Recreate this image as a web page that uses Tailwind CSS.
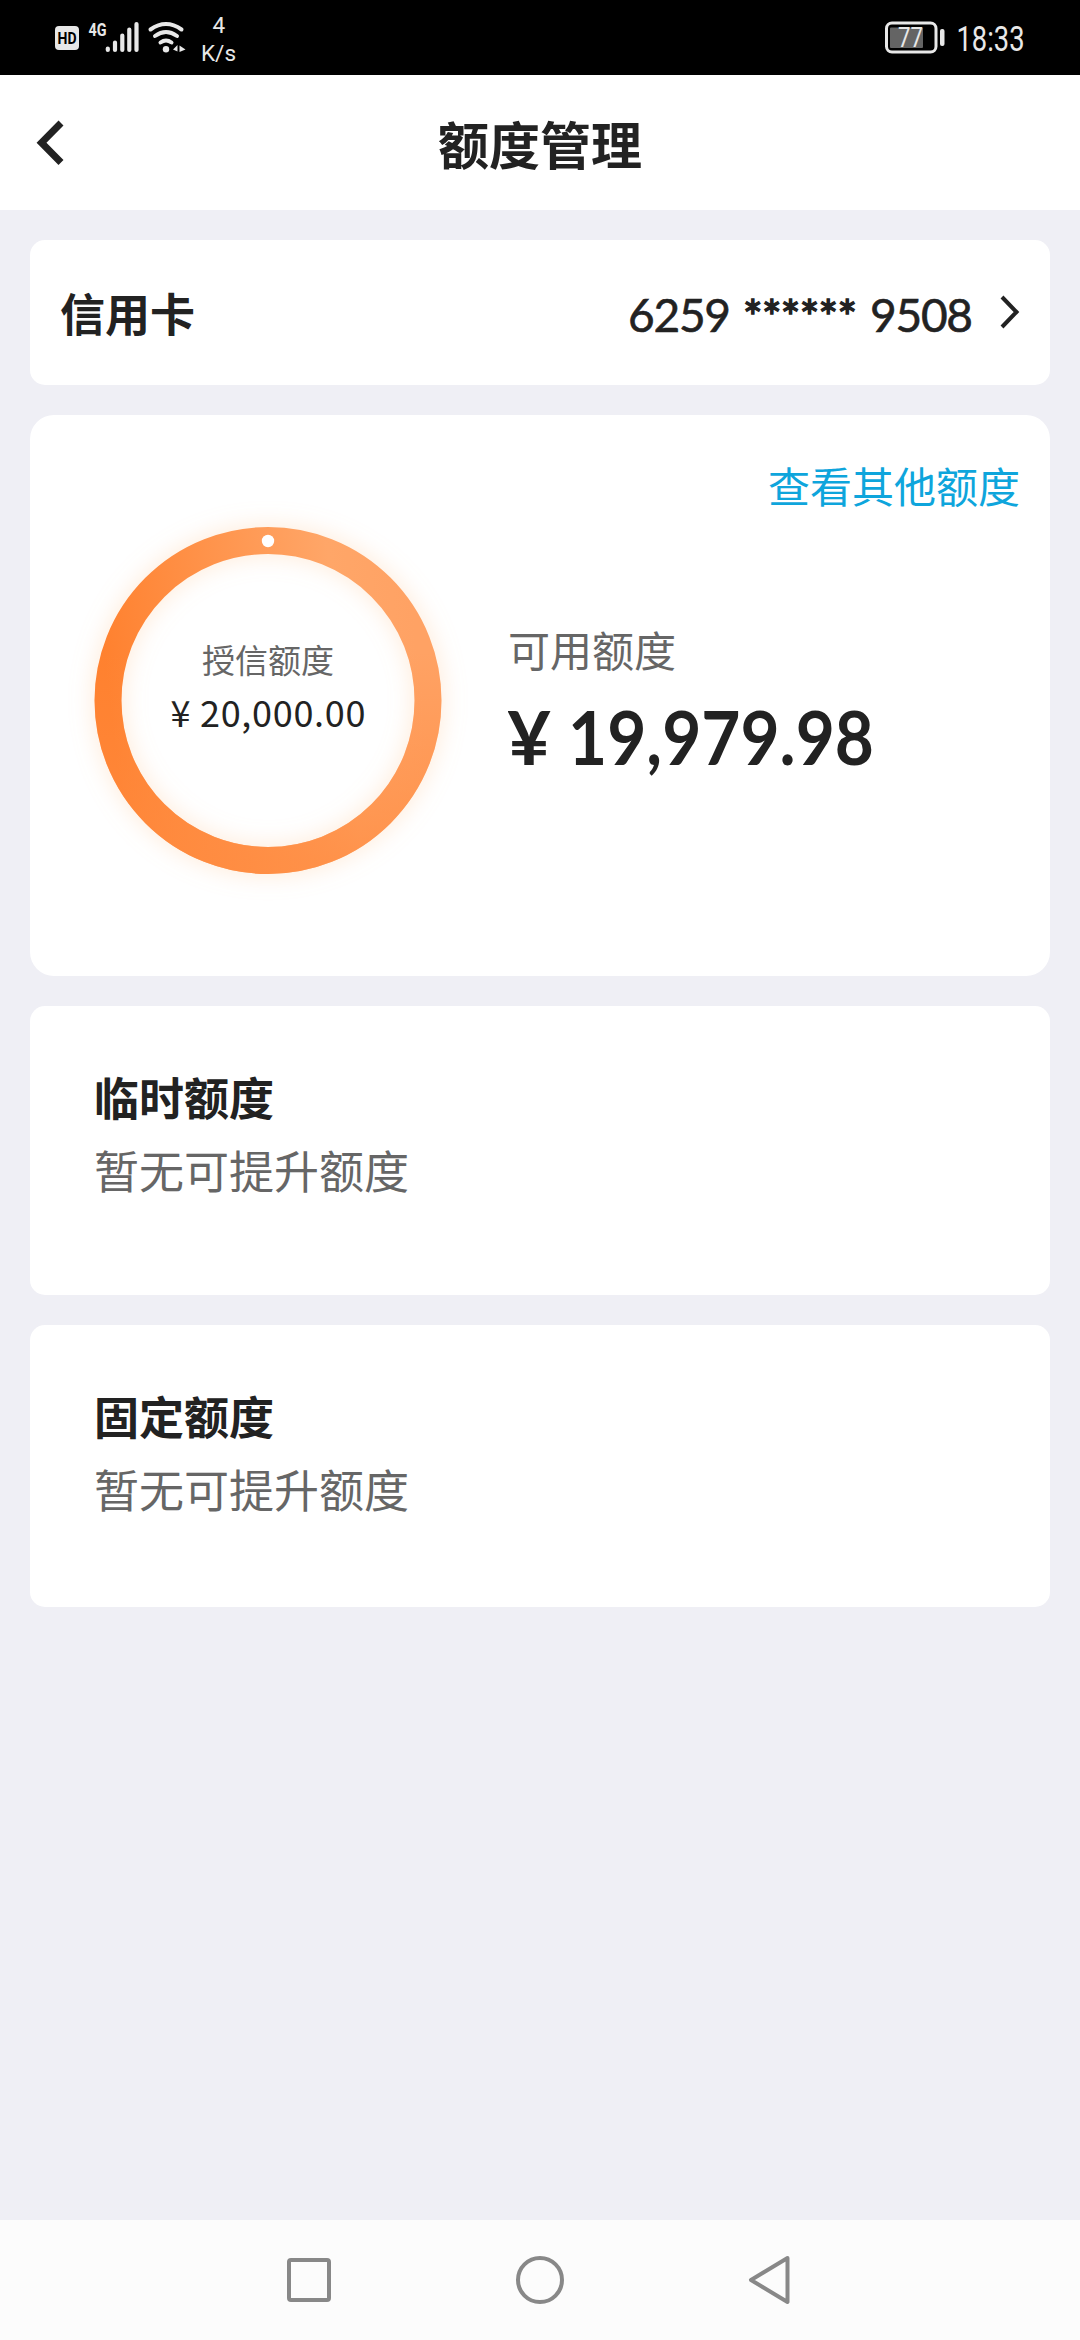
<!DOCTYPE html>
<html lang="zh-CN">
<head>
<meta charset="utf-8">
<title>额度管理</title>
<script src="https://cdn.jsdelivr.net/npm/@tailwindcss/browser@4"></script>
</head>
<body class="flex h-[2340px] w-[1080px] flex-col overflow-hidden bg-[#efeff5] font-['Noto_Sans_CJK_SC',sans-serif] text-[#222]">
  <!-- Status bar -->
  <div class="flex h-[75px] shrink-0 justify-between bg-black">
    <svg class="h-[75px] w-[260px]" viewBox="0 0 260 75" fill="#e8e8e8">
      <rect x="55" y="26" width="24" height="24" rx="4"/>
      <text x="57.5" y="44" font-family="Roboto, sans-serif" font-size="16.5" font-weight="700" fill="#000" textLength="19" lengthAdjust="spacingAndGlyphs">HD</text>
      <text x="88.500" y="36" font-family="Roboto, sans-serif" font-size="19" font-weight="700" textLength="18" lengthAdjust="spacingAndGlyphs">4G</text>
      <g stroke="#e8e8e8" stroke-width="4.200" stroke-linecap="round">
        <path d="M107.800 48.500v1.500M115 42.500V50M122.300 35.500V50M129.300 29.500V50M136.500 24V50"/>
      </g>
      <g fill="none" stroke="#e8e8e8" stroke-width="4" stroke-linecap="round">
        <path d="M150.500 29.500Q166 18.500 181.500 29.500M155 36Q166 28 177 36M160.500 42.500Q166 38.500 171.500 42.500"/>
      </g>
      <circle cx="166" cy="49.300" r="3.200"/>
      <path d="M173 49.500l4.500-4.500v6.500zM179.500 45.500l6 4-6 2.500z"/>
      <text x="212.500" y="33" font-family="Roboto, sans-serif" font-size="22.500">4</text>
      <text x="201" y="60.500" font-family="Roboto, sans-serif" font-size="22.500" textLength="35">K/s</text>
    </svg>
    <svg class="h-[75px] w-[220px]" viewBox="0 0 220 75" fill="#e8e8e8">
      <rect x="26.500" y="23" width="49.500" height="29" rx="5.500" fill="none" stroke="#e8e8e8" stroke-width="3"/>
      <rect x="30" y="27.500" width="33" height="20.500" rx="1" fill="#646464"/>
      <rect x="80" y="29" width="4.500" height="17" rx="2"/>
      <text x="38" y="47" font-family="Roboto, sans-serif" font-size="27" textLength="25" lengthAdjust="spacingAndGlyphs">77</text>
      <text x="96.500" y="51" font-family="Roboto, sans-serif" font-size="35" textLength="68" lengthAdjust="spacingAndGlyphs">18:33</text>
    </svg>
  </div>

  <!-- Title bar -->
  <header class="grid h-[135px] shrink-0 grid-cols-[120px_1fr_120px] items-center bg-white">
    <svg class="ml-[30px] h-[48px] w-[40px]" viewBox="0 0 40 48" fill="none" stroke="#222" stroke-width="7"><path d="M31 4L11.500 23.700 31 43.500"/></svg>
    <h1 class="text-center text-[51px] leading-[60px] font-bold">额度管理</h1>
  </header>

  <main class="flex flex-1 flex-col gap-[30px] px-[30px] pt-[30px]">
    <section class="flex h-[145px] items-center justify-between rounded-[15px] bg-white pr-[28px] pl-[30px]">
      <h2 class="text-[45px] leading-[60px] font-bold">信用卡</h2>
      <div class="flex items-center">
        <svg class="h-[60px] w-[350px]" viewBox="0 0 350 60" fill="#222" stroke="#222" stroke-width="0.600" font-family="Lato, sans-serif" font-size="46">
          <text x="3" y="48.500" textLength="103">6259</text>
          <text x="118" y="50.500" textLength="114" stroke-width="1.500">******</text>
          <text x="245" y="48.500" textLength="103">9508</text>
        </svg>
        <svg class="ml-[23px] h-[36px] w-[24px] -translate-y-px" viewBox="0 0 24 36" fill="none" stroke="#222" stroke-width="4"><path d="M4 3L18.500 18 4 33"/></svg>
      </div>
    </section>

    <section class="flex h-[561px] flex-col rounded-[24px] bg-white">
      <a class="mt-[40px] mr-[30px] self-end text-[42px] leading-[60px] text-[#0ea5dc]">查看其他额度</a>
      <div class="flex">
        <svg class="-mt-[35px] ml-[18px] h-[440px] w-[440px] shrink-0" viewBox="0 0 440 440">
          <defs>
            <linearGradient id="ring" gradientUnits="userSpaceOnUse" x1="55" y1="165" x2="365" y2="130">
              <stop offset="0" stop-color="#ff812f"/>
              <stop offset="0.750" stop-color="#ffa668"/>
              <stop offset="1" stop-color="#ffa264"/>
            </linearGradient>
            <linearGradient id="low" x1="0" y1="0" x2="0" y2="1">
              <stop offset="0.350" stop-color="#ff8b40" stop-opacity="0"/>
              <stop offset="1" stop-color="#ff8b40" stop-opacity="0.700"/>
            </linearGradient>
            <filter id="glow" x="-20%" y="-20%" width="140%" height="140%"><feGaussianBlur stdDeviation="11"/></filter>
          </defs>
          <circle cx="220" cy="220.500" r="160" fill="none" stroke="#ffc48e" stroke-opacity="0.300" stroke-width="32" filter="url(#glow)"/>
          <circle cx="220" cy="220.500" r="160" fill="none" stroke="url(#ring)" stroke-width="27"/>
          <circle cx="220" cy="220.500" r="160" fill="none" stroke="url(#low)" stroke-width="27"/>
          <circle cx="220" cy="61" r="6.200" fill="#fff"/>
          <text x="220" y="193" text-anchor="middle" font-size="33" fill="#666">授信额度</text>
          <text x="122.500" y="247" font-size="36" fill="#222" textLength="195">¥ 20,000.00</text>
        </svg>
        <div class="mt-[104px] ml-[20px] flex flex-col">
          <p class="text-[42px] leading-[60px] text-[#666]">可用额度</p>
          <svg class="h-[110px] w-[380px]" viewBox="0 0 380 110" fill="#222" font-family="Lato, sans-serif" font-size="74" font-weight="700">
            <text x="-1" y="86" textLength="44" lengthAdjust="spacingAndGlyphs">¥</text>
            <text x="60" y="86" textLength="306" lengthAdjust="spacingAndGlyphs">19,979.98</text>
          </svg>
        </div>
      </div>
    </section>

    <section class="flex h-[289px] flex-col gap-[13px] rounded-[15px] bg-white px-[64px] pt-[61px]">
      <h2 class="text-[45px] leading-[60px] font-bold">临时额度</h2>
      <p class="text-[45px] leading-[60px] text-[#666]">暂无可提升额度</p>
    </section>

    <section class="flex h-[282px] flex-col gap-[13px] rounded-[15px] bg-white px-[64px] pt-[61px]">
      <h2 class="text-[45px] leading-[60px] font-bold">固定额度</h2>
      <p class="text-[45px] leading-[60px] text-[#666]">暂无可提升额度</p>
    </section>
  </main>

  <!-- System navigation -->
  <nav class="flex h-[120px] shrink-0 items-center justify-center gap-[179px] bg-[#fcfcfc]">
    <svg class="h-[52px] w-[52px]" viewBox="0 0 52 52" fill="none" stroke="#888" stroke-width="4"><rect x="6" y="6" width="40" height="40" rx="2"/></svg>
    <svg class="h-[52px] w-[52px]" viewBox="0 0 52 52" fill="none" stroke="#888" stroke-width="4"><circle cx="26" cy="26" r="22"/></svg>
    <svg class="h-[52px] w-[52px]" viewBox="0 0 52 52" fill="none" stroke="#888" stroke-width="4" stroke-linejoin="round"><path d="M42.500 4L6 26l36.500 22z"/></svg>
  </nav>
</body>
</html>
